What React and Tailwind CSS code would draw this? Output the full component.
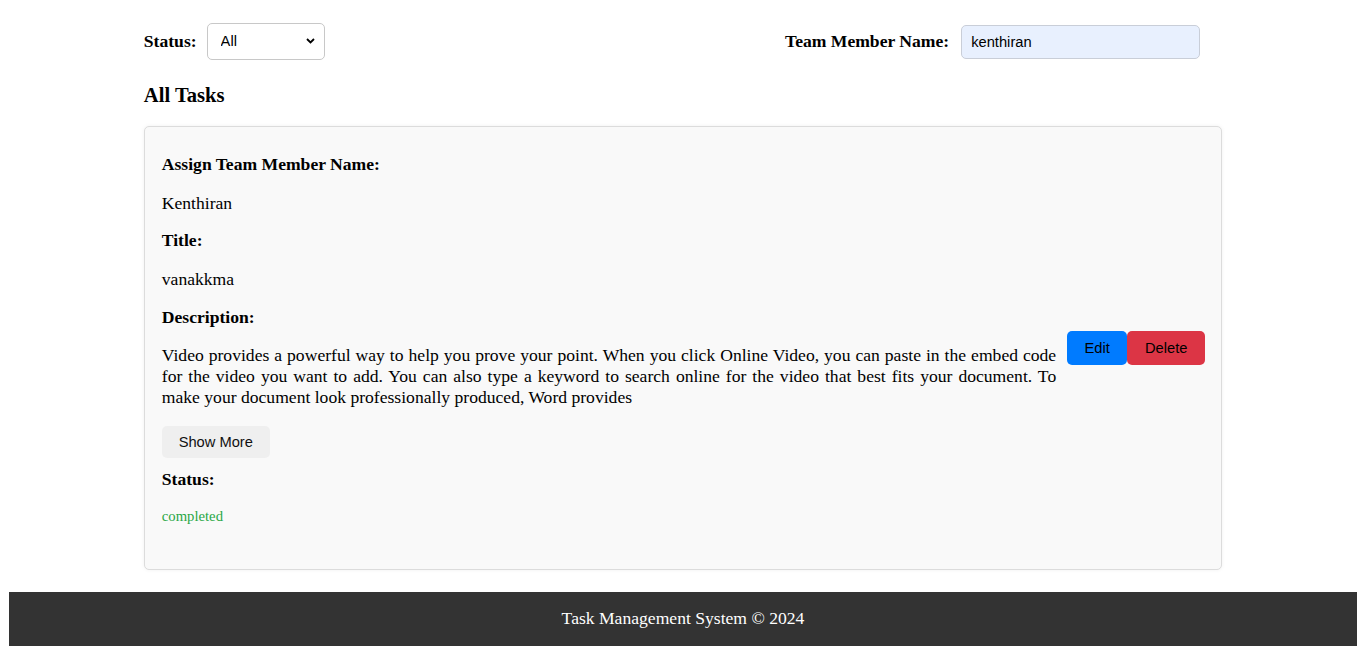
import { useState } from 'react';

const serif = { fontFamily: '"Liberation Serif", "Times New Roman", serif' };

const description =
  'Video provides a powerful way to help you prove your point. When you click Online Video, you can paste in the embed code for the video you want to add. You can also type a keyword to search online for the video that best fits your document. To make your document look professionally produced, Word provides';

function Field({ label, value, className = '' }) {
  return (
    <>
      <p className={`font-bold leading-[20px] ${className}`}>{label}</p>
      <p className="mt-[19px] leading-[20px]">{value}</p>
    </>
  );
}

export default function App() {
  const [status, setStatus] = useState('All');
  const [name, setName] = useState('kenthiran');

  return (
    <div className="min-h-[655px] bg-white px-[9px] pb-[9px] text-[17.6px] text-black" style={serif}>
      <div className="mx-auto w-[80%]">
        <div className="mt-[23px] flex h-[37px] items-center justify-between pr-[22px]">
          <div className="flex items-center">
            <label className="mr-[10px] font-bold">Status:</label>
            <div className="relative">
              <select
                value={status}
                onChange={(e) => setStatus(e.target.value)}
                className="h-[37px] w-[118px] appearance-none rounded-[5px] border border-[#c8c8c8] bg-white pl-[13px] text-[14.7px] text-black"
                style={{ fontFamily: '"Liberation Sans", Arial, sans-serif' }}
              >
                <option>All</option>
                <option>pending</option>
                <option>completed</option>
              </select>
              <svg
                className="pointer-events-none absolute right-[10px] top-[15px]"
                width="9"
                height="6"
                viewBox="0 0 9 6"
              >
                <path d="M1 1l3.5 3.5L8 1" fill="none" stroke="#000" strokeWidth="1.8" />
              </svg>
            </div>
          </div>
          <div className="flex items-center">
            <label className="mr-[12px] font-bold">Team Member Name:</label>
            <input
              value={name}
              onChange={(e) => setName(e.target.value)}
              className="h-[34px] w-[239px] rounded-[5px] border border-[#c9ced8] bg-[#e8f0fe] pl-[9px] text-[14.7px] text-black outline-none"
              style={{ fontFamily: '"Liberation Sans", Arial, sans-serif' }}
            />
          </div>
        </div>

        <h3 className="mt-[23px] text-[20.6px] font-bold leading-[24px]">All Tasks</h3>

        <div className="mt-[19px] flex items-center rounded-[5px] border border-[#dcdcdc] bg-[#f9f9f9] pl-[17px] pr-[16px] shadow-[0_0_4px_rgba(0,0,0,0.06)]">
          <div className="flex-1 pb-[44px] pt-[27px]">
            <Field label="Assign Team Member Name:" value="Kenthiran" />
            <Field label="Title:" value="vanakkma" className="mt-[17px]" />
            <p className="mt-[18px] font-bold leading-[20px]">Description:</p>
            <p className="mt-[18px] text-justify leading-[21px]">{description}</p>
            <button
              className="mt-[18px] h-[32px] w-[108px] rounded-[5px] bg-[#efefef] text-[14.7px] text-[#111]"
              style={{ fontFamily: '"Liberation Sans", Arial, sans-serif' }}
            >
              Show More
            </button>
            <p className="mt-[11px] font-bold leading-[20px]">Status:</p>
            <p className="mt-[19px] text-[14.7px] leading-[17px] text-[#28a745]">completed</p>
          </div>
          <div
            className="ml-[11px] flex text-[14.7px] text-black"
            style={{ fontFamily: '"Liberation Sans", Arial, sans-serif' }}
          >
            <button className="h-[34px] w-[60px] rounded-[5px] bg-[#007bff]">Edit</button>
            <button className="h-[34px] w-[78px] rounded-[5px] bg-[#dc3545]">Delete</button>
          </div>
        </div>
      </div>

      <footer className="mt-[22px] flex h-[54px] items-center justify-center bg-[#333333] pb-[2px] text-white">
        Task Management System © 2024
      </footer>
    </div>
  );
}
